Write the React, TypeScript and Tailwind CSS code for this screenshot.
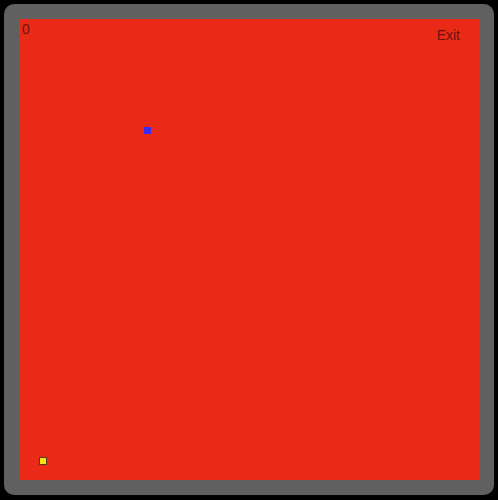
import React from "react";

const font = { fontFamily: '"Liberation Sans", Arial, sans-serif' };

export default function App() {
  return (
    <div className="min-h-[500px] w-[498px] bg-black p-[4px]" style={font}>
      <div className="h-[491px] w-[490px] rounded-[10px] bg-[#606060] p-[15px]">
        {/* game field */}
        <div className="relative h-full w-full bg-[#e82a16]">
          <div className="flex items-start justify-between text-[14px] leading-4 text-[#6e120e]">
            <span className="pl-[3px] pt-[2px]">0</span>
            <button className="mr-[19px] mt-[8px] leading-4">Exit</button>
          </div>
          {/* enemy */}
          <div className="absolute left-[125px] top-[108px] h-[7px] w-[7px] bg-[#3a2cf0]" />
          {/* player */}
          <div className="absolute left-[20px] top-[438px] h-[8px] w-[8px] border border-[#5a3a10] bg-[#f2e21a]" />
        </div>
      </div>
    </div>
  );
}
